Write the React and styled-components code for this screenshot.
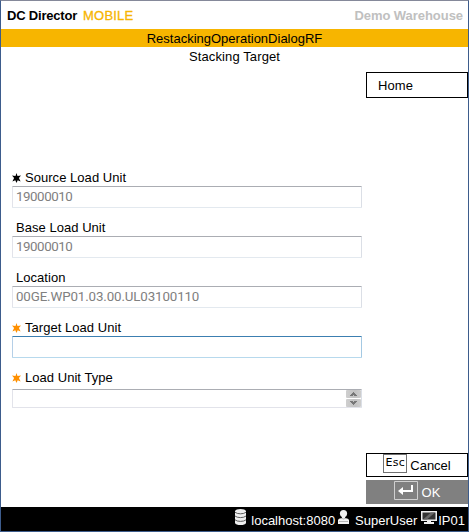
import React from "react";
import styled, { createGlobalStyle } from "styled-components";

const GlobalStyle = createGlobalStyle`
  * { box-sizing: border-box; }
  body {
    margin: 0;
    background: #fff;
    color: #000;
    font: 13px/18px "Liberation Sans", Arial, sans-serif;
  }
`;

const Frame = styled.div`
  width: 469px;
  height: 532px;
  display: flex;
  flex-direction: column;
  background: #fff;
  border: 1px solid #3d5c8c;
  border-top-color: #85899a;
`;

const Header = styled.header`
  height: 28px;
  flex: none;
  display: flex;
  justify-content: space-between;
  padding: 6px 5px 0 6px;
  font-weight: 700;
`;

const Brand = styled.div`
  display: flex;
  gap: 6px;
  letter-spacing: -0.2px;
`;

const Product = styled.span`
  color: #f7b500;
  font-weight: 400;
  letter-spacing: 0.2px;
  -webkit-text-stroke: 0.3px #f7b500;
`;

const Site = styled.div`
  color: #c0c0c0;
  letter-spacing: -0.05px;
`;

const TitleBar = styled.h1`
  height: 18px;
  flex: none;
  margin: 0;
  background: #f7b500;
  font-size: inherit;
  font-weight: 400;
  line-height: 19px;
  text-align: center;
`;

const Subtitle = styled.h2`
  height: 25px;
  flex: none;
  margin: 0;
  font-size: inherit;
  font-weight: 400;
  line-height: 19px;
  letter-spacing: 0.12px;
  text-align: center;
`;

const Main = styled.main`
  height: 435px;
  flex: none;
  display: flex;
  justify-content: space-between;
`;

const Form = styled.form`
  width: 350px;
  margin: 97px 0 0 11px;
`;

const Field = styled.div`
  height: 50px;
`;

const Label = styled.label`
  height: 17px;
  display: flex;
  align-items: center;
  gap: 4px;
  padding-left: ${(p) => (p.$indent ? "4px" : "0")};
  line-height: 17px;
  letter-spacing: 0.04px;
`;

const Star = styled.svg`
  width: 9px;
  height: 10px;
  flex: none;
  fill: ${(p) => p.$color};
`;

const TextInput = styled.input`
  display: block;
  width: 350px;
  height: 22px;
  margin: 0;
  padding: 0 3px 1px;
  border: 1px solid;
  border-color: ${(p) => (p.$active ? "#3c7fb1 #a4c9e3 #b7d9ed #b5cfe7" : "#abadb3 #dbdfe6 #e3e9ef #e2e3ea")};
  border-radius: 1px;
  outline: 0;
  background: #fff;
  color: #808080;
  font: 13.33px/19px Roboto, "Liberation Sans", sans-serif;
  letter-spacing: ${(p) => p.$tracking || 0}px;
`;

const Picker = styled.div`
  width: 350px;
  height: 19px;
  margin-top: 3px;
  display: flex;
  justify-content: flex-end;
  border: 1px solid;
  border-color: #abadb3 #dbdfe6 #e2e3ea #e2e3ea;
  border-radius: 1px;
`;

const Stepper = styled.div`
  width: 15px;
  height: 17px;
  display: grid;
  grid-template-rows: 8px 8px;
  gap: 1px;
`;

const Step = styled.button`
  padding: 0;
  border: 0;
  border-radius: 1px;
  display: grid;
  place-items: center;
  background: linear-gradient(90deg, #cfcfcf, #c2c2c2 60%, #cecece);

  > svg { display: block; }
`;

const Side = styled.aside`
  width: 102px;
  display: flex;
  flex-direction: column;
  justify-content: space-between;
`;

const Home = styled.button`
  height: 26px;
  padding: 1px 0 0 11px;
  border: 1px solid #000;
  background: #fff;
  color: #000;
  font: inherit;
  letter-spacing: 0.1px;
  text-align: left;
`;

const Actions = styled.div`
  height: 51px;
  display: flex;
  flex-direction: column;
  gap: 3px;
  margin-bottom: 3px;
`;

const Action = styled.button`
  height: 24px;
  display: flex;
  justify-content: center;
  align-items: flex-start;
  gap: ${(p) => (p.$primary ? "4px" : "3px")};
  padding: ${(p) => (p.$primary ? "1px 0 0" : "0")};
  border: ${(p) => (p.$primary ? "0" : "1px solid #000")};
  background: ${(p) => (p.$primary ? "#808080" : "#fff")};
  color: ${(p) => (p.$primary ? "#fff" : "#000")};
  font: inherit;

  > span { margin-top: 3px; }
`;

const EscKey = styled.kbd`
  width: 24px;
  height: 19px;
  border: 1px solid #707070;
  font: 11px/15px "DejaVu Sans", sans-serif;
  letter-spacing: 0.2px;
  text-align: center;
`;

const EnterKey = styled.svg`
  width: 24px;
  height: 19px;
`;

const StatusBar = styled.footer`
  height: 24px;
  flex: none;
  display: flex;
  justify-content: flex-end;
  padding: 0 3px 0 0;
  background: #000;
  color: #fff;
`;

const Status = styled.div`
  display: flex;
  align-items: flex-start;
  gap: ${(p) => p.$gap}px;
  margin-left: ${(p) => p.$before || 0}px;

  > span { margin-top: 5px; }
  > svg { margin-top: ${(p) => p.$iconTop}px; }
`;

const RequiredStar = ({ color }) => (
  <Star viewBox="0 0 9 10" $color={color}>
    <path d="M4.5 0 5.5 3 9 2.600 6.900 5 8.600 8.400 5.700 7.200 4.500 10 3.300 7.200 .4 8.400 2.100 5 0 2.600 3.500 3Z" />
  </Star>
);

const fields = [
  { id: "source", label: "Source Load Unit", value: "19000010", star: "#000", tracking: -0.45 },
  { id: "base", label: "Base Load Unit", value: "19000010", tracking: -0.45 },
  { id: "location", label: "Location", value: "00GE.WP01.03.00.UL03100110", tracking: -0.13 },
  { id: "target", label: "Target Load Unit", value: "", star: "#ff9000", active: true },
];

export default function App() {
  return (
    <>
      <GlobalStyle />
      <Frame>
        <Header>
          <Brand>
            <span>DC Director</span>
            <Product>MOBILE</Product>
          </Brand>
          <Site>Demo Warehouse</Site>
        </Header>
        <TitleBar>RestackingOperationDialogRF</TitleBar>
        <Subtitle>Stacking Target</Subtitle>
        <Main>
          <Form>
            {fields.map((f) => (
              <Field key={f.id}>
                <Label htmlFor={f.id} $indent={!f.star}>
                  {f.star && <RequiredStar color={f.star} />}
                  {f.label}
                </Label>
                <TextInput
                  id={f.id}
                  defaultValue={f.value}
                  disabled={!f.active}
                  $active={f.active}
                  $tracking={f.tracking}
                />
              </Field>
            ))}
            <Field>
              <Label>
                <RequiredStar color="#ff9000" />
                Load Unit Type
              </Label>
              <Picker>
                <Stepper>
                  <Step type="button" aria-label="Previous">
                    <svg width="7" height="4" viewBox="0 0 7 4" shapeRendering="crispEdges">
                      <path fill="#777" d="M3 0h1v1h1v1h1v1h1v1H4V3H3v1H0V3h1V2h1V1h1z" />
                    </svg>
                  </Step>
                  <Step type="button" aria-label="Next">
                    <svg width="7" height="4" viewBox="0 0 7 4" shapeRendering="crispEdges">
                      <path fill="#777" d="M0 0h3v1h1V0h3v1H6v1H5v1H4v1H3V3H2V2H1V1H0z" />
                    </svg>
                  </Step>
                </Stepper>
              </Picker>
            </Field>
          </Form>
          <Side>
            <Home>Home</Home>
            <Actions>
              <Action>
                <EscKey>Esc</EscKey>
                <span>Cancel</span>
              </Action>
              <Action $primary>
                <EnterKey viewBox="0 0 24 19">
                  <path fill="none" stroke="#d0d0d0" d="M.5.5h23v18H.5z" />
                  <path fill="none" stroke="#fff" strokeWidth="2" d="M18 4v6H7" />
                  <path fill="#fff" d="M4 10l5-4v8z" />
                </EnterKey>
                <span>OK</span>
              </Action>
            </Actions>
          </Side>
        </Main>
        <StatusBar>
          <Status $gap={5} $iconTop={2}>
            <svg width="11" height="16" viewBox="0 0 12 16" preserveAspectRatio="none">
              <path fill="#eee" d="M0 2Q1 0 6 0t6 2v12q-1 2-6 2t-6-2z" />
              <path fill="none" stroke="#555" d="M0 3.2q2 1.6 6 1.6t6-1.6M0 7q2 1.6 6 1.6T12 7M0 10.8q2 1.6 6 1.6t6-1.6" />
            </svg>
            <span>localhost:8080</span>
          </Status>
          <Status $gap={6} $before={3} $iconTop={3}>
            <svg width="11" height="14" viewBox="0 0 11 14">
              <circle cx="5.5" cy="3.6" r="3.6" fill="#f3f3f3" />
              <path fill="#f3f3f3" d="M4 6h3v2l3 .8 1 1.2v4H0v-4l1-1.2L4 8z" />
              <path fill="none" stroke="#999" strokeWidth=".7" d="M1 11.5h9M3 8l2.500 1L8 8" />
            </svg>
            <span>SuperUser</span>
          </Status>
          <Status $gap={1} $before={4} $iconTop={4}>
            <svg width="16" height="13" viewBox="0 0 16 13">
              <path fill="#eee" d="M0 0h16v10h-6v1h3v2H3v-2h3v-1H0z" />
              <path fill="#333" d="M1.5 1.5h13v7h-13z" />
              <path fill="#666" d="M2 8.500l8-7h4l-8 7z" />
            </svg>
            <span>IP01</span>
          </Status>
        </StatusBar>
      </Frame>
    </>
  );
}
